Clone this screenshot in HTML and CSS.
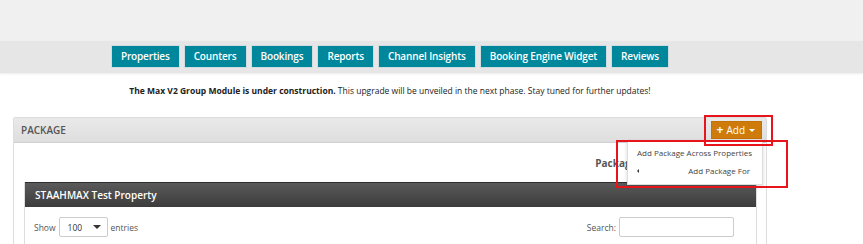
FILE: index.html
```html
<!doctype html>
<html>
<head>
<title>Package</title>
<meta charset="utf-8">
<link rel="stylesheet" href="styles.css">
</head>
<body>
<div class="topbar"></div>

<!-- Main menu -->
<nav class="menu">
    <div class="wrap menu-row">
        <a class="menu-btn">Properties</a>
        <a class="menu-btn">Counters</a>
        <a class="menu-btn">Bookings</a>
        <a class="menu-btn">Reports</a>
        <a class="menu-btn">Channel Insights</a>
        <a class="menu-btn">Booking Engine Widget</a>
        <a class="menu-btn">Reviews</a>
    </div>
</nav>

<div class="wrap">
    <p class="notice"><strong>The Max V2 Group Module is under construction.</strong> This upgrade will be unveiled in the next phase. Stay tuned for further updates!</p>

    <section class="panel">
        <div class="panel-head">
            <span class="panel-title">PACKAGE</span>
            <div class="add-wrap">
                <button class="add-btn"><span class="plus">+</span> Add <span class="caret"></span></button>
                <ul class="add-menu">
                    <li class="first">Add Package Across Properties</li>
                    <li class="sub"><span class="caret-left"></span>Add Package For</li>
                </ul>
                <div class="mark mark-btn"></div>
                <div class="mark mark-menu"></div>
            </div>
        </div>
        <div class="panel-body">
            <div class="filter-row">Package Name</div>
            <div class="prop">
                <div class="prop-head">STAAHMAX Test Property</div>
                <div class="prop-tools">
                    <label>Show
                        <span class="select">100<span class="caret dark"></span></span>
                        entries</label>
                    <label>Search: <span class="search"></span></label>
                </div>
            </div>
        </div>
    </section>
</div>
</body>
</html>
```

FILE: styles.css
```css
* {
    margin: 0;
    padding: 0;
    box-sizing: border-box;
}
body {
    font-family: "Open Sans", sans-serif;
    font-size: 10px;
    color: #333;
    background: #fff;
}
.wrap {
    width: 754px;
    margin-left: 13px;
}
.topbar {
    height: 41px;
    background: #f0f0f0;
}
.menu {
    height: 32px;
    background: #e6e6e6;
    box-shadow: 0 1px 2px rgba(0,0,0,0.08);
}
.menu-row {
    display: flex;
    justify-content: center;
    gap: 4px;
    padding-top: 4px;
}
.menu-btn {
    display: block;
    height: 23px;
    line-height: 21px;
    padding: 0 9px;
    background: #00879c;
    border: 1px solid #d0dde0;
    color: #fff;
    font-weight: 600;
    font-size: 10px;
    letter-spacing: -0.15px;
}
.notice {
    text-align: center;
    margin: 9px 0 0;
    line-height: 17px;
    color: #222;
    font-size: 8.5px;
}
.notice strong {
    font-weight: 700;
}
.panel {
    margin-top: 18px;
    border: 1px solid #ddd;
    border-radius: 2px 2px 0 0;
}
.panel-head {
    height: 25px;
    display: flex;
    align-items: center;
    justify-content: space-between;
    padding: 0 4px 0 7px;
    background: linear-gradient(#e9e9e9, #dedede);
    border-bottom: 1px solid #d0d0d0;
}
.panel-title {
    font-weight: 600;
    color: #555;
    font-size: 10px;
}
.add-wrap {
    position: relative;
}
.add-btn {
    display: flex;
    align-items: center;
    gap: 3px;
    height: 18px;
    padding: 0 6px 0 5px;
    background: #cf7b0b;
    border: 1px solid #c27208;
    color: #fff;
    font-family: "Open Sans", sans-serif;
    font-size: 10px;
}
.plus {
    font-weight: 700;
    font-size: 12px;
    line-height: 1;
}
.caret {
    width: 0;
    height: 0;
    border-left: 3px solid transparent;
    border-right: 3px solid transparent;
    border-top: 3px solid #fff;
    margin-left: 1px;
}
.caret.dark {
    border-top-color: #333;
    border-left-width: 4px;
    border-right-width: 4px;
    border-top-width: 4px;
}
.add-menu {
    list-style: none;
    position: absolute;
    top: 19px;
    right: -1px;
    width: 136px;
    background: #fff;
    border: 1px solid #ddd;
    box-shadow: 0 2px 4px rgba(0,0,0,0.15);
    padding: 3px 0 4px;
    font-size: 8px;
    color: #444;
    z-index: 2;
}
.add-menu li {
    line-height: 18px;
    padding: 0 8px 0 9px;
    white-space: nowrap;
}
.add-menu li.sub {
    display: flex;
    align-items: center;
    justify-content: space-between;
    padding-right: 12px;
}
.caret-left {
    width: 0;
    height: 0;
    border-top: 2px solid transparent;
    border-bottom: 2px solid transparent;
    border-right: 2px solid #333;
}
.mark {
    position: absolute;
    border: 2px solid #e8141b;
    z-index: 3;
}
.mark-btn {
    top: -6px;
    left: -7px;
    width: 69px;
    height: 31px;
}
.mark-menu {
    top: 19px;
    left: -95px;
    width: 172px;
    height: 48px;
}
.panel-body {
    padding: 10px 9px 0 10px;
}
.filter-row {
    text-align: right;
    height: 29px;
    padding-right: 88px;
    padding-top: 3px;
    font-weight: 700;
    color: #555;
    font-size: 10px;
}
.prop {
    border: 1px solid #ddd;
    border-top: none;
}
.prop-head {
    height: 25px;
    line-height: 25px;
    padding-left: 10px;
    background: linear-gradient(#5a5a5a, #3c3c3c);
    border-top: 1px solid #2e2e2e;
    color: #fff;
    font-weight: 600;
    font-size: 10px;
}
.prop-tools {
    display: flex;
    justify-content: space-between;
    padding: 10px 22px 10px 9px;
    font-size: 8.5px;
    color: #555;
}
.prop-tools label {
    display: flex;
    align-items: center;
    gap: 3px;
}
.select {
    display: flex;
    align-items: center;
    justify-content: space-between;
    width: 49px;
    height: 20px;
    padding: 0 6px 0 8px;
    border: 1px solid #ccc;
    border-radius: 2px;
    color: #333;
}
.search {
    display: block;
    width: 115px;
    height: 20px;
    border: 1px solid #ccc;
    border-radius: 2px;
}
```
